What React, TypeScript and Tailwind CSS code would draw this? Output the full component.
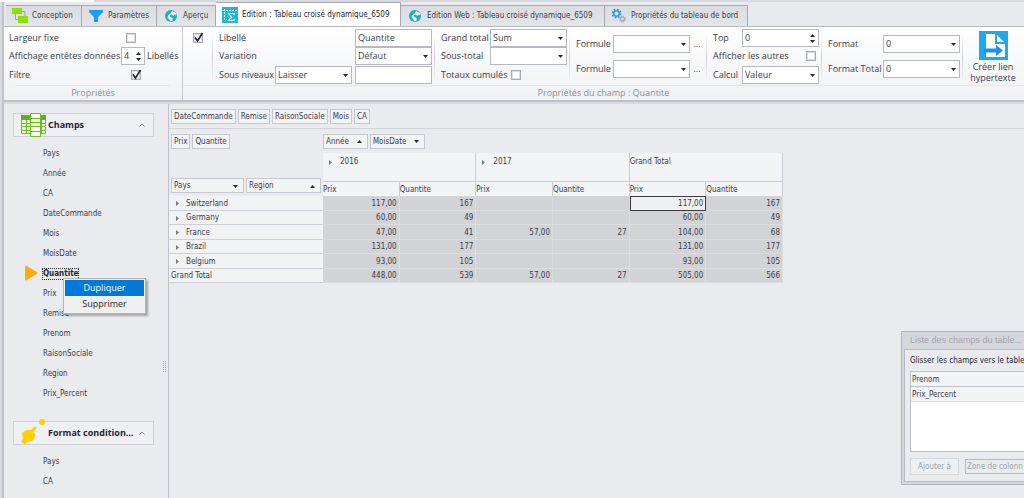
import type { ReactNode } from 'react';

const tabs = [
  { name: 'Conception', icon: 'blocks', className: 'w-[76px]' },
  { name: 'Paramètres', icon: 'funnel', className: 'w-[75px]' },
  { name: 'Aperçu', icon: 'globe', className: 'w-[59px]' },
  { name: 'Edition : Tableau croisé dynamique_6509', icon: 'sigma', className: 'w-[185px]', active: true },
  { name: 'Edition Web : Tableau croisé dynamique_6509', icon: 'globe', className: 'w-[204px]' },
  { name: 'Propriétés du tableau de bord', icon: 'gears', className: 'w-[143px]' },
];

const fields = [
  'Pays',
  'Année',
  'CA',
  'DateCommande',
  'Mois',
  'MoisDate',
  'Quantite',
  'Prix',
  'Remise',
  'Prenom',
  'RaisonSociale',
  'Region',
  'Prix_Percent',
];

const filterFields = ['DateCommande', 'Remise', 'RaisonSociale', 'Mois', 'CA'];

const rows = [
  { name: 'Switzerland', values: ['117,00', '167', '', '', '117,00', '167'] },
  { name: 'Germany', values: ['60,00', '49', '', '', '60,00', '49'] },
  { name: 'France', values: ['47,00', '41', '57,00', '27', '104,00', '68'] },
  { name: 'Brazil', values: ['131,00', '177', '', '', '131,00', '177'] },
  { name: 'Belgium', values: ['93,00', '105', '', '', '93,00', '105'] },
  { name: 'Grand Total', values: ['448,00', '539', '57,00', '27', '505,00', '566'] },
];

function TabIcon({ name }: { name: string }) {
  if (name === 'blocks') {
    return (
      <svg viewBox="0 0 16 16" className="size-4 shrink-0">
        <path d="M0 0h10v6H0zM6 8h10v7H6z" fill="#8fe000" />
        <path d="M3.500 6v5.500H6M10 3.500h3V8" fill="none" stroke="#9aa58a" strokeWidth="1" />
      </svg>
    );
  }
  if (name === 'funnel') {
    return (
      <svg viewBox="0 0 16 16" className="size-4 shrink-0">
        <path d="M1 2h14v2L10 9v5H6V9L1 4z" fill="#1a9dff" />
      </svg>
    );
  }
  if (name === 'globe') {
    return (
      <svg viewBox="0 0 16 16" className="size-4 shrink-0">
        <circle cx="8" cy="8" r="6" fill="#1aafc0" />
        <path d="M9 3l3.500 1.500 1 2.500-2-.5-1 1.500-2-1.500-2 1 1 1.500 2 1v3l-2.500.5-.5-2-2-2 .5-2L8 5z" fill="#f1fbfc" />
        <path d="M10 8.500l2 .5-.5 2.500-1.500 1z" fill="#1aafc0" />
      </svg>
    );
  }
  if (name === 'sigma') {
    return (
      <svg viewBox="0 0 16 16" className="size-4 shrink-0">
        <path d="M0 0h16v16H0z" fill="#19b9dd" />
        <path d="M2.500 2v12M1 3.500h14" stroke="#e8fbff" strokeWidth="1" strokeDasharray="2 1" />
        <path d="M12 8V6.500H6.500l3 3.500-3 3.500H12V12" fill="none" stroke="#fff" strokeWidth="1.200" />
      </svg>
    );
  }
  return (
    <svg viewBox="0 0 16 16" className="size-4 shrink-0">
      <circle cx="5.500" cy="5.500" r="2.800" fill="none" stroke="#2f9bdc" strokeWidth="1.600" />
      <circle cx="5.500" cy="5.500" r="4.200" fill="none" stroke="#2f9bdc" strokeWidth="1.400" strokeDasharray="1.700 1.600" />
      <circle cx="11.500" cy="11" r="2" fill="none" stroke="#a9abb2" strokeWidth="1.300" />
      <circle cx="11.500" cy="11" r="3" fill="none" stroke="#a9abb2" strokeWidth="1" strokeDasharray="1.300 1.050" />
    </svg>
  );
}

function Arrow({ up = false, className = '' }: { up?: boolean; className?: string }) {
  return (
    <svg viewBox="0 0 5 3" className={`h-[3px] w-[5px] shrink-0 fill-[#26262e] ${className}`}>
      <path d={up ? 'M0 3L2.500 0L5 3z' : 'M0 0L2.500 3L5 0z'} />
    </svg>
  );
}

function Expander() {
  return (
    <svg viewBox="0 0 3 5" className="h-[5px] w-[3px] shrink-0 fill-[#777982]">
      <path d="M0 0L3 2.500L0 5z" />
    </svg>
  );
}

function Select({ label, value, className = 'w-[77px]' }: { label: string; value: string; className?: string }) {
  return (
    <span className={`relative block ${className}`}>
      <select
        aria-label={label}
        defaultValue={value}
        className="block h-[18px] w-full appearance-none border border-[#b7b8c0] bg-white pb-px pl-[2px] pr-3 leading-[15px]"
      >
        <option>{value}</option>
      </select>
      <Arrow className="pointer-events-none absolute right-1 top-[8px]" />
    </span>
  );
}

function TextBox({ label, value }: { label: string; value: string }) {
  return (
    <input
      type="text"
      aria-label={label}
      defaultValue={value}
      className="block h-[18px] w-[77px] border border-[#b7b8c0] bg-white pb-px pl-[2px]"
    />
  );
}

function Spinner({ id, value, className }: { id: string; value: string; className: string }) {
  return (
    <span className={`relative block ${className}`}>
      <input
        id={id}
        type="text"
        defaultValue={value}
        className="block h-[18px] w-full border border-[#b7b8c0] bg-white pb-px pl-[2px]"
      />
      <button type="button" aria-label="Augmenter" className="absolute right-1 top-1 flex h-[5px] items-center">
        <Arrow up />
      </button>
      <button type="button" aria-label="Diminuer" className="absolute bottom-[3px] right-1 flex h-[5px] items-center">
        <Arrow />
      </button>
    </span>
  );
}

function Checkbox({ id, label, checked = false }: { id: string; label?: string; checked?: boolean }) {
  return (
    <span className="relative block size-[10px]">
      <input
        id={id}
        type="checkbox"
        aria-label={label}
        defaultChecked={checked}
        className="peer block size-[10px] appearance-none border border-[#a9aab3] bg-white shadow-[inset_0_0_0_1px_#dcdde2]"
      />
      <svg
        viewBox="0 0 10 10"
        className="pointer-events-none absolute inset-0 hidden size-[10px] overflow-visible peer-checked:block"
      >
        <path d="M2 4.500L4.500 8L9.500 0" fill="none" stroke="#22222c" strokeWidth="1.600" />
      </svg>
    </span>
  );
}

function Divider() {
  return <div className="mt-2 h-[46px] w-px shrink-0 bg-gradient-to-b from-transparent via-[#cfd0d7] to-transparent" />;
}

function Chip({ name, arrow, className = '' }: { name: string; arrow?: 'up' | 'down'; className?: string }) {
  return (
    <button
      type="button"
      className={`flex h-[15px] shrink-0 items-center justify-between gap-2 whitespace-nowrap border border-[#c6c7d0] bg-[#f3f4f6] px-[2px] pt-px ${className}`}
    >
      {name}
      {arrow && <Arrow up={arrow === 'up'} className="mr-[3px]" />}
    </button>
  );
}

function SectionHeader({ title, children }: { title: string; children: ReactNode }) {
  return (
    <button
      type="button"
      className="flex h-6 w-[141px] items-center border border-[#cfd0d7] bg-[#eff0f3] pl-[7px] pr-2 text-left font-['Open_Sans',sans-serif] text-[9px] font-bold text-[#26262e]"
    >
      {children}
      <span className="ml-[2px] flex-1 truncate">{title}</span>
      <svg viewBox="0 0 6 4" className="h-1 w-[6px] shrink-0">
        <path d="M.5 3.500L3 1l2.500 2.500" fill="none" stroke="#85868f" />
      </svg>
    </button>
  );
}

function Ribbon() {
  return (
    <div className="flex h-[75px] shrink-0 overflow-hidden border-b-2 border-[#bfc0c8] bg-gradient-to-b from-white to-[#f0f1f4] font-['Open_Sans',sans-serif] text-[9px]">
      <section className="flex w-[179px] shrink-0 flex-col border-r border-[#c9cad1]">
        <div className="grid h-[58px] grid-cols-[112px_24px_auto] grid-rows-[19px_18px_19px] items-center pl-[5px] pt-px">
          <label htmlFor="fixed-width">Largeur fixe</label>
          <div className="col-span-2 pl-[5px]">
            <Checkbox id="fixed-width" />
          </div>
          <label htmlFor="header-display" className="whitespace-nowrap">Affichage entêtes données</label>
          <Spinner id="header-display" value="4" className="w-6" />
          <span className="pl-[2px]">Libellés</span>
          <label htmlFor="filter">Filtre</label>
          <div className="col-span-2 pl-[10px]">
            <Checkbox id="filter" checked />
          </div>
        </div>
        <h2 className="mx-3 border-t border-[#e6e7eb] text-center leading-[13px] text-[#8d8e97]">Propriétés</h2>
      </section>

      <section className="flex min-w-0 flex-1 flex-col">
        <div className="flex h-[58px]">
          <div className="w-[29px] shrink-0 pl-[10px] pt-[6px]">
            <Checkbox id="visible" label="Visible" checked />
          </div>
          <Divider />
          <div className="grid w-[221px] shrink-0 grid-cols-[56px_80px_77px] grid-rows-[19px_18px_19px] items-center pl-[6px] pt-px">
            <span className="col-span-2">Libellé</span>
            <TextBox label="Libellé" value="Quantite" />
            <span className="col-span-2">Variation</span>
            <Select label="Variation" value="Défaut" />
            <span className="whitespace-nowrap">Sous niveaux</span>
            <Select label="Sous niveaux" value="Laisser" />
            <TextBox label="Valeur des sous niveaux" value="" />
          </div>
          <Divider />
          <div className="grid w-[134px] shrink-0 grid-cols-[49px_77px] grid-rows-[19px_18px_19px] items-center pl-[6px] pt-px">
            <span className="whitespace-nowrap">Grand total</span>
            <Select label="Grand total" value="Sum" />
            <span>Sous-total</span>
            <Select label="Sous-total" value="" />
            <div className="col-span-2 flex items-center gap-1">
              <label htmlFor="cumulated">Totaux cumulés</label>
              <Checkbox id="cumulated" />
            </div>
          </div>
          <Divider />
          <div className="grid w-[136px] shrink-0 grid-cols-[37px_77px_14px] grid-rows-2 items-center py-1 pl-[6px]">
            <span>Formule</span>
            <Select label="Formule" value="" />
            <button type="button" aria-label="Modifier la formule">...</button>
            <span>Formule</span>
            <Select label="Formule du total" value="" />
            <button type="button" aria-label="Modifier la formule du total">...</button>
          </div>
          <Divider />
          <div className="grid w-[114px] shrink-0 grid-cols-[29px_77px] grid-rows-[19px_18px_19px] items-center pl-[6px] pt-px">
            <label htmlFor="top">Top</label>
            <Spinner id="top" value="0" className="w-[77px]" />
            <div className="col-span-2 flex items-center justify-between pr-[3px]">
              <label htmlFor="others">Afficher les autres</label>
              <Checkbox id="others" />
            </div>
            <span>Calcul</span>
            <Select label="Calcul" value="Valeur" />
          </div>
          <Divider />
          <div className="grid w-[140px] shrink-0 grid-cols-[55px_77px] grid-rows-2 items-center py-1 pl-[6px]">
            <span>Format</span>
            <Select label="Format" value="0" />
            <span className="whitespace-nowrap">Format Total</span>
            <Select label="Format Total" value="0" />
          </div>
          <Divider />
          <button type="button" className="flex w-[60px] shrink-0 flex-col items-center gap-px pt-1 leading-[11px]">
            <svg viewBox="0 0 29 29" className="size-[29px] shrink-0">
              <path d="M0 0h29v29H0z" fill="#1fa8ea" />
              <path d="M7 3h9v10h10v13H7z" fill="#fff" />
              <path d="M18 4l7 7h-7z" fill="#fff" />
              <path d="M5 17.500h12v-3.500l7 5.500-7 5.500v-3.500H5z" fill="#1b93ea" />
            </svg>
            <span>
              Créer lien
              <br />
              hypertexte
            </span>
          </button>
        </div>
        <h2 className="border-t border-[#e6e7eb] text-center leading-[13px] text-[#8d8e97]">Propriétés du champ : Quantite</h2>
      </section>
    </div>
  );
}

function ContextMenu() {
  return (
    <div
      role="menu"
      className="absolute left-[59px] top-[174px] z-10 flex h-9 w-[83px] flex-col border border-[#b5b5b9] bg-[#f0f0f1] p-px font-['Open_Sans',sans-serif] text-[9px] shadow-[2px_2px_2px_rgba(0,0,0,0.3)]"
    >
      <button type="button" role="menuitem" className="h-4 bg-[#0078d7] text-white">Dupliquer</button>
      <button type="button" role="menuitem" className="h-4 text-[#26262e]">Supprimer</button>
    </div>
  );
}

function Sidebar() {
  return (
    <aside className="relative w-[165px] shrink-0 border-r border-[#bfc0c9] bg-[#eaebef] pl-[9px] pt-[9px]">
      <SectionHeader title="Champs">
        <svg viewBox="0 0 25 24" className="h-6 w-[25px] shrink-0" fill="none" stroke="#6cc01e">
          <path d="M.5 2.500h24v18H.5z" fill="#f2f9ea" />
          <path d="M0 2h25v5H0z" fill="#5cb313" stroke="none" />
          <path d="M0 10.500h25M0 13.500h25M0 17.500h25M5.500 7v13M20.500 7v13" />
          <path d="M9.500.5h10v23h-10z" fill="#f4faee" />
          <path d="M9 5.500h11M9 9.500h11M9 13.500h11M9 18.500h11" />
        </svg>
      </SectionHeader>
      <ul className="mb-[18px] mt-[6px]">
        {fields.map((name) => (
          <li key={name} className="relative flex h-5 items-center pl-[30px] pt-[2px]">
            {name === 'Quantite' && (
              <svg viewBox="0 0 14 16" className="absolute left-[11px] top-[2px] h-4 w-[14px]">
                <path d="M2 1.500L12.500 8L2 14.500z" fill="#ffad0d" stroke="#ffad0d" strokeWidth="2" strokeLinejoin="round" />
              </svg>
            )}
            <a
              href="#"
              className={name === 'Quantite' ? 'font-bold leading-[10px] text-[#26262e] outline-1 outline-dotted outline-[#26262e]' : ''}
            >
              {name}
            </a>
          </li>
        ))}
      </ul>
      <SectionHeader title="Format conditionnel">
        <svg viewBox="0 0 25 24" className="h-6 w-[25px] shrink-0 overflow-visible" fill="#ffd000">
          <circle cx="21" cy="1" r="3" />
          <path d="M1 12q4-4 9-3l4 4q0 5-3 7l-5 1-2 2.500-4-3 2-3z" />
          <path d="M9 12L14 7" stroke="#ffd000" strokeWidth="3" strokeLinecap="round" />
        </svg>
      </SectionHeader>
      <ul className="mt-[6px]">
        {['Pays', 'CA'].map((name) => (
          <li key={name} className="flex h-5 items-center pl-[30px] pt-[2px]">
            <a href="#">{name}</a>
          </li>
        ))}
      </ul>
      <svg viewBox="0 0 3 11" className="absolute right-[2px] top-[257px] h-[11px] w-[3px]">
        <path d="M.5 0v11M2.500 0v11" stroke="#a2a3ac" strokeDasharray="1 1" />
      </svg>
      <ContextMenu />
    </aside>
  );
}

function PivotTable() {
  return (
    <table className="w-[614px] table-fixed border-separate border-spacing-0 text-left">
      <colgroup>
        <col className="w-[154px]" />
        <col span={6} />
      </colgroup>
      <thead>
        <tr className="h-6">
          <td className="p-0 pl-[2px]">
            <div className="flex gap-[2px]">
              <Chip name="Prix" />
              <Chip name="Quantite" />
            </div>
          </td>
          <td colSpan={6} className="p-0">
            <div className="flex gap-[2px]">
              <Chip name="Année" arrow="up" />
              <Chip name="MoisDate" arrow="down" />
            </div>
          </td>
        </tr>
        <tr className="h-[29px]">
          <td rowSpan={2} className="p-0 pb-[3px] pl-[2px] align-bottom">
            <div className="flex gap-[2px]">
              <Chip name="Pays" arrow="down" className="w-[73px]" />
              <Chip name="Region" arrow="up" className="w-[75px]" />
            </div>
          </td>
          {['2016', '2017', 'Grand Total'].map((name) => (
            <th key={name} colSpan={2} className="border-b border-r border-[#cbccd4] bg-[#f3f4f6] p-0 pt-[3px] align-top font-normal">
              {name === 'Grand Total' ? (
                name
              ) : (
                <span className="flex items-center gap-2 pl-[6px]">
                  <Expander />
                  {name}
                </span>
              )}
            </th>
          ))}
        </tr>
        <tr className="h-[14px]">
          {['Prix', 'Quantite', 'Prix', 'Quantite', 'Prix', 'Quantite'].map((name, i) => (
            <th key={i} className="border-r border-[#cbccd4] bg-[#f3f4f6] p-0 pt-[2px] font-normal leading-3">
              {name}
            </th>
          ))}
        </tr>
      </thead>
      <tbody>
        {rows.map((row, i) => (
          <tr key={row.name} className="odd:h-[15px] even:h-[14px]">
            <th className="border-b border-[#cfd0d7] bg-[#f2f3f5] p-0 pt-px font-normal leading-3">
              {row.name === 'Grand Total' ? (
                <span className="pl-[2px]">{row.name}</span>
              ) : (
                <span className="flex items-center gap-[6px] pl-[7px]">
                  <Expander />
                  <span className="pl-px">{row.name}</span>
                </span>
              )}
            </th>
            {row.values.map((value, j) => (
              <td
                key={j}
                className={`border-b border-r border-[#dcdde1] p-0 pr-[2px] pt-px text-right leading-3 ${
                  i === 0 && j === 4 ? 'bg-[#eff0f2] outline-1 -outline-offset-1 outline-[#3a3a40]' : 'bg-[#d2d3d7]'
                }`}
              >
                {value}
              </td>
            ))}
          </tr>
        ))}
      </tbody>
    </table>
  );
}

function FieldListWindow() {
  return (
    <div className="absolute left-[732px] top-[227px] w-[180px] border border-[#b4b5bc] bg-[#d6d7dc] p-[2px]">
      <h2 className="h-[15px] whitespace-nowrap pl-[6px] font-['Liberation_Sans',sans-serif] text-[9px] leading-[13px] text-[#a3a4ac]">
        Liste des champs du table...
      </h2>
      <div className="border border-[#b9bac2] bg-[#eaebef] px-[5px] pb-[6px] pt-1">
        <p className="whitespace-nowrap leading-[14px] text-[#26262e]">Glisser les champs vers le table</p>
        <ul className="mt-[3px] h-[81px] border border-[#bfc0c9] bg-white">
          <li className="h-[15px] border-b border-[#bfc0c9] bg-[#f3f4f6] pl-px pt-px leading-[14px]">Prenom</li>
          <li className="h-[15px] border-b border-[#dddee3] bg-[#f3f4f6] pl-px pt-px leading-[14px]">Prix_Percent</li>
        </ul>
        <div className="mt-[6px] flex gap-[6px] text-[#a3a4ac]">
          <button type="button" disabled className="h-[17px] w-[49px] shrink-0 border border-[#d6d7dd] bg-[#eff0f3]">
            Ajouter à
          </button>
          <select
            aria-label="Zone"
            disabled
            className="h-[15px] w-[100px] appearance-none self-center border border-[#b7b8c0] bg-[#eaebef] pl-px"
          >
            <option>Zone de colonn</option>
          </select>
        </div>
      </div>
    </div>
  );
}

export default function App() {
  return (
    <div className="flex min-h-screen flex-col overflow-hidden bg-[#d9dadf] font-['DejaVu_Sans_Condensed','Open_Sans',sans-serif] text-[8px] leading-3 text-[#3c3c48]">
      <div className="h-[2px] w-[94px] bg-white" />
      <div className="ml-[2px] flex flex-1 flex-col border-l-2 border-[#c1c2cb]">
        <nav className="flex h-[25px] shrink-0 items-end border-b border-[#b7b8c0] bg-[#e9eaee] pl-[2px]">
          {tabs.map((tab) => (
            <button
              key={tab.name}
              type="button"
              className={`flex items-center gap-1 whitespace-nowrap border-r border-t border-[#a6a7b0] pl-[6px] ${tab.className} ${
                tab.active ? 'h-6 bg-white text-[#26262e]' : 'h-[21px] bg-gradient-to-b from-[#dbdce1] to-[#e4e5e9]'
              }`}
            >
              <TabIcon name={tab.icon} />
              {tab.name}
            </button>
          ))}
        </nav>
        <Ribbon />
        <div className="flex flex-1 pt-[2px]">
          <Sidebar />
          <main className="relative min-w-0 flex-1 overflow-hidden bg-[#eaebef]">
            <div className="flex h-[25px] items-center gap-[2px] border-b border-[#d3d4da] pl-[2px]">
              {filterFields.map((name) => (
                <Chip key={name} name={name} />
              ))}
            </div>
            <PivotTable />
            <FieldListWindow />
          </main>
        </div>
      </div>
    </div>
  );
}
